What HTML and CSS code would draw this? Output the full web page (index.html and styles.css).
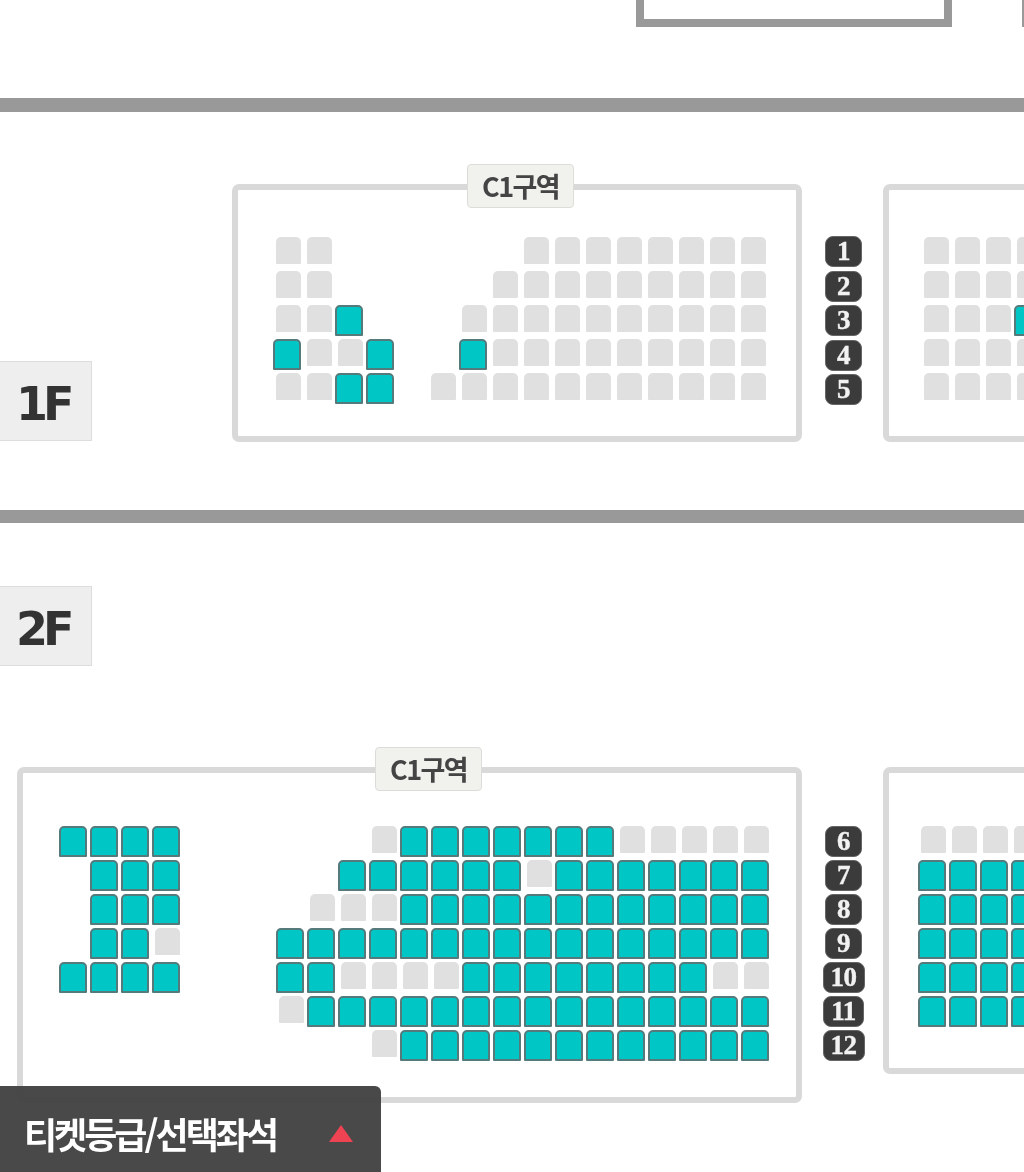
FILE: index.html
```html
<!DOCTYPE html>
<html lang="ko">
<head>
    <meta charset="UTF-8">
    <title>좌석선택</title>
    <link rel="stylesheet" href="styles.css">
</head>
<body>
<div id="page">
    <div class="top">
        <div class="stage"></div>
        <div class="stage stage2"></div>
    </div>
    <div class="divider"></div>

    <div class="floor1">
        <div class="floortag tag1">1F</div>
        <div class="zone zone1a">
            <div class="zonename name1">C1구역</div>
            <div class="seats cols16">
                <i class="g"></i><i class="g"></i><i></i><i></i><i></i><i></i><i></i><i></i><i class="g"></i><i class="g"></i><i class="g"></i><i class="g"></i><i class="g"></i><i class="g"></i><i class="g"></i><i class="g"></i>
                <i class="g"></i><i class="g"></i><i></i><i></i><i></i><i></i><i></i><i class="g"></i><i class="g"></i><i class="g"></i><i class="g"></i><i class="g"></i><i class="g"></i><i class="g"></i><i class="g"></i><i class="g"></i>
                <i class="g"></i><i class="g"></i><i class="t"></i><i></i><i></i><i></i><i class="g"></i><i class="g"></i><i class="g"></i><i class="g"></i><i class="g"></i><i class="g"></i><i class="g"></i><i class="g"></i><i class="g"></i><i class="g"></i>
                <i class="t"></i><i class="g"></i><i class="g"></i><i class="t"></i><i></i><i></i><i class="t"></i><i class="g"></i><i class="g"></i><i class="g"></i><i class="g"></i><i class="g"></i><i class="g"></i><i class="g"></i><i class="g"></i><i class="g"></i>
                <i class="g"></i><i class="g"></i><i class="t"></i><i class="t"></i><i></i><i class="g"></i><i class="g"></i><i class="g"></i><i class="g"></i><i class="g"></i><i class="g"></i><i class="g"></i><i class="g"></i><i class="g"></i><i class="g"></i><i class="g"></i>
            </div>
        </div>
        <div class="rownums rownums1">
            <span>1</span><span>2</span><span>3</span><span>4</span><span>5</span>
        </div>
        <div class="zone zone1b">
            <div class="seats cols4">
                <i class="g"></i><i class="g"></i><i class="g"></i><i class="g"></i>
                <i class="g"></i><i class="g"></i><i class="g"></i><i class="g"></i>
                <i class="g"></i><i class="g"></i><i class="g"></i><i class="t"></i>
                <i class="g"></i><i class="g"></i><i class="g"></i><i class="g"></i>
                <i class="g"></i><i class="g"></i><i class="g"></i><i class="g"></i>
            </div>
        </div>
    </div>

    <div class="divider divider2"></div>

    <div class="floortag tag2">2F</div>
    <div class="floor2">
        <div class="zone zone2a">
            <div class="zonename name2">C1구역</div>
            <div class="seats cols23">
                <i class="t"></i><i class="t"></i><i class="t"></i><i class="t"></i><i></i><i></i><i></i><i></i><i></i><i></i><i class="g"></i><i class="t"></i><i class="t"></i><i class="t"></i><i class="t"></i><i class="t"></i><i class="t"></i><i class="t"></i><i class="g"></i><i class="g"></i><i class="g"></i><i class="g"></i><i class="g"></i>
                <i></i><i class="t"></i><i class="t"></i><i class="t"></i><i></i><i></i><i></i><i></i><i></i><i class="t"></i><i class="t"></i><i class="t"></i><i class="t"></i><i class="t"></i><i class="t"></i><i class="g"></i><i class="t"></i><i class="t"></i><i class="t"></i><i class="t"></i><i class="t"></i><i class="t"></i><i class="t"></i>
                <i></i><i class="t"></i><i class="t"></i><i class="t"></i><i></i><i></i><i></i><i></i><i class="g"></i><i class="g"></i><i class="g"></i><i class="t"></i><i class="t"></i><i class="t"></i><i class="t"></i><i class="t"></i><i class="t"></i><i class="t"></i><i class="t"></i><i class="t"></i><i class="t"></i><i class="t"></i><i class="t"></i>
                <i></i><i class="t"></i><i class="t"></i><i class="g"></i><i></i><i></i><i></i><i class="t"></i><i class="t"></i><i class="t"></i><i class="t"></i><i class="t"></i><i class="t"></i><i class="t"></i><i class="t"></i><i class="t"></i><i class="t"></i><i class="t"></i><i class="t"></i><i class="t"></i><i class="t"></i><i class="t"></i><i class="t"></i>
                <i class="t"></i><i class="t"></i><i class="t"></i><i class="t"></i><i></i><i></i><i></i><i class="t"></i><i class="t"></i><i class="g"></i><i class="g"></i><i class="g"></i><i class="g"></i><i class="t"></i><i class="t"></i><i class="t"></i><i class="t"></i><i class="t"></i><i class="t"></i><i class="t"></i><i class="t"></i><i class="g"></i><i class="g"></i>
                <i></i><i></i><i></i><i></i><i></i><i></i><i></i><i class="g"></i><i class="t"></i><i class="t"></i><i class="t"></i><i class="t"></i><i class="t"></i><i class="t"></i><i class="t"></i><i class="t"></i><i class="t"></i><i class="t"></i><i class="t"></i><i class="t"></i><i class="t"></i><i class="t"></i><i class="t"></i>
                <i></i><i></i><i></i><i></i><i></i><i></i><i></i><i></i><i></i><i></i><i class="g"></i><i class="t"></i><i class="t"></i><i class="t"></i><i class="t"></i><i class="t"></i><i class="t"></i><i class="t"></i><i class="t"></i><i class="t"></i><i class="t"></i><i class="t"></i><i class="t"></i>
            </div>
        </div>
        <div class="rownums rownums2">
            <span>6</span><span>7</span><span>8</span><span>9</span><span>10</span><span>11</span><span>12</span>
        </div>
        <div class="zone zone2b">
            <div class="seats cols4">
                <i class="g"></i><i class="g"></i><i class="g"></i><i class="g"></i>
                <i class="t"></i><i class="t"></i><i class="t"></i><i class="t"></i>
                <i class="t"></i><i class="t"></i><i class="t"></i><i class="t"></i>
                <i class="t"></i><i class="t"></i><i class="t"></i><i class="t"></i>
                <i class="t"></i><i class="t"></i><i class="t"></i><i class="t"></i>
                <i class="t"></i><i class="t"></i><i class="t"></i><i class="t"></i>
            </div>
        </div>
    </div>

    <div class="ticketbar">
        <span class="ticketname">티켓등급/선택좌석</span>
        <svg class="arrow" width="24" height="17" viewBox="0 0 24 17"><polygon points="12,0 24,17 0,17" fill="#ee4353"/></svg>
    </div>
</div>
</body>
</html>
```

FILE: styles.css
```css
* {
    box-sizing: border-box;
}
html, body {
    margin: 0;
    padding: 0;
    background: #ffffff;
}
#page {
    position: relative;
    width: 1024px;
    height: 1172px;
    overflow: hidden;
    filter: blur(0.6px);
}

/* stage outline at the top */
.top {
    display: flex;
    height: 98px;
    padding-left: 636px;
}
.stage {
    flex: none;
    width: 316px;
    height: 27px;
    border: solid 8px #999999;
    border-top: none;
}
.stage2 {
    margin-left: 70px;
}
.divider {
    height: 14px;
    background: #999999;
}
.divider2 {
    height: 13px;
}

/* floors */
.floor1 {
    display: flex;
    align-items: flex-start;
    padding-top: 72px;
    height: 398px;
}
.floor2 {
    display: flex;
    align-items: flex-start;
    padding-left: 17px;
    margin-top: 101px;
}
.floortag {
    flex: none;
    width: 92px;
    height: 80px;
    background: #eeeeee;
    border: solid 1px #dddddd;
    border-left: none;
    color: #333333;
    font-family: "DejaVu Sans", sans-serif;
    font-weight: bold;
    font-size: 46px;
    letter-spacing: -5px;
    line-height: 84px;
    padding-left: 16px;
}
.tag1 {
    align-self: flex-end;
    margin-right: 140px;
    margin-bottom: 69px;
}
.tag2 {
    margin-top: 63px;
}

/* seat zones */
.zone {
    position: relative;
    flex: none;
    border: solid 6px #d9d9d9;
    border-radius: 7px;
}
.zone1a {
    width: 570px;
    height: 258px;
    padding: 47px 0 0 35px;
}
.zone1b {
    width: 400px;
    height: 258px;
    padding: 47px 0 0 32px;
}
.zone2a {
    width: 785px;
    height: 336px;
    padding: 53px 0 0 36px;
}
.zone2b {
    width: 400px;
    height: 307px;
    padding: 53px 0 0 29px;
}
.zonename {
    position: absolute;
    top: -26px;
    width: 107px;
    height: 44px;
    background: #f1f1ed;
    border: solid 1px #dcdcd8;
    border-radius: 4px;
    color: #444444;
    font-family: "Noto Sans CJK KR", sans-serif;
    font-weight: bold;
    font-size: 27px;
    letter-spacing: -1.6px;
    line-height: 41px;
    text-align: center;
}
.name1 {
    left: 229px;
}
.name2 {
    left: 352px;
}
.seats {
    display: grid;
    grid-auto-rows: 34px;
}
.cols16 {
    grid-template-columns: repeat(16, 31px);
}
.cols23 {
    grid-template-columns: repeat(23, 31px);
}
.cols4 {
    grid-template-columns: repeat(4, 31px);
}
.seats i {
    display: block;
}
.seats .g {
    width: 25px;
    height: 27px;
    margin-left: 3px;
    background: #e0e0e0;
    border-radius: 5px 5px 1px 1px;
}
.seats .t {
    width: 28px;
    height: 31px;
    background: #00c6c6;
    border: solid 2px #557a7c;
    border-radius: 5px 5px 1px 1px;
}

/* row numbers */
.rownums {
    flex: none;
    width: 81px;
    display: flex;
    flex-direction: column;
    align-items: center;
    gap: 3px;
    padding: 52px 0 0 2px;
}
.rownums1 {
    gap: 3.6px;
}
.rownums2 {
    padding-top: 59px;
}
.rownums span {
    min-width: 37px;
    height: 31px;
    padding: 0 7px;
    background: #3b3b3b;
    border: solid 1px #666666;
    border-radius: 8px;
    color: #f2f2f2;
    font-family: "Liberation Serif", serif;
    font-weight: bold;
    font-size: 27px;
    letter-spacing: -0.5px;
    line-height: 28px;
    text-align: center;
    -webkit-text-stroke: 0.4px #f2f2f2;
}

/* ticket bar over the seat map */
.ticketbar {
    position: absolute;
    left: 0;
    bottom: 0;
    width: 381px;
    height: 86px;
    display: flex;
    align-items: center;
    background: rgba(66, 66, 66, 0.96);
    border-radius: 0 6px 0 0;
    padding: 8px 0 0 24px;
}
.ticketname {
    width: 305px;
    color: #ffffff;
    font-family: "Noto Sans CJK KR", sans-serif;
    font-weight: bold;
    font-size: 36px;
    letter-spacing: -3px;
    line-height: 50px;
}
.arrow {
    flex: none;
}
```
